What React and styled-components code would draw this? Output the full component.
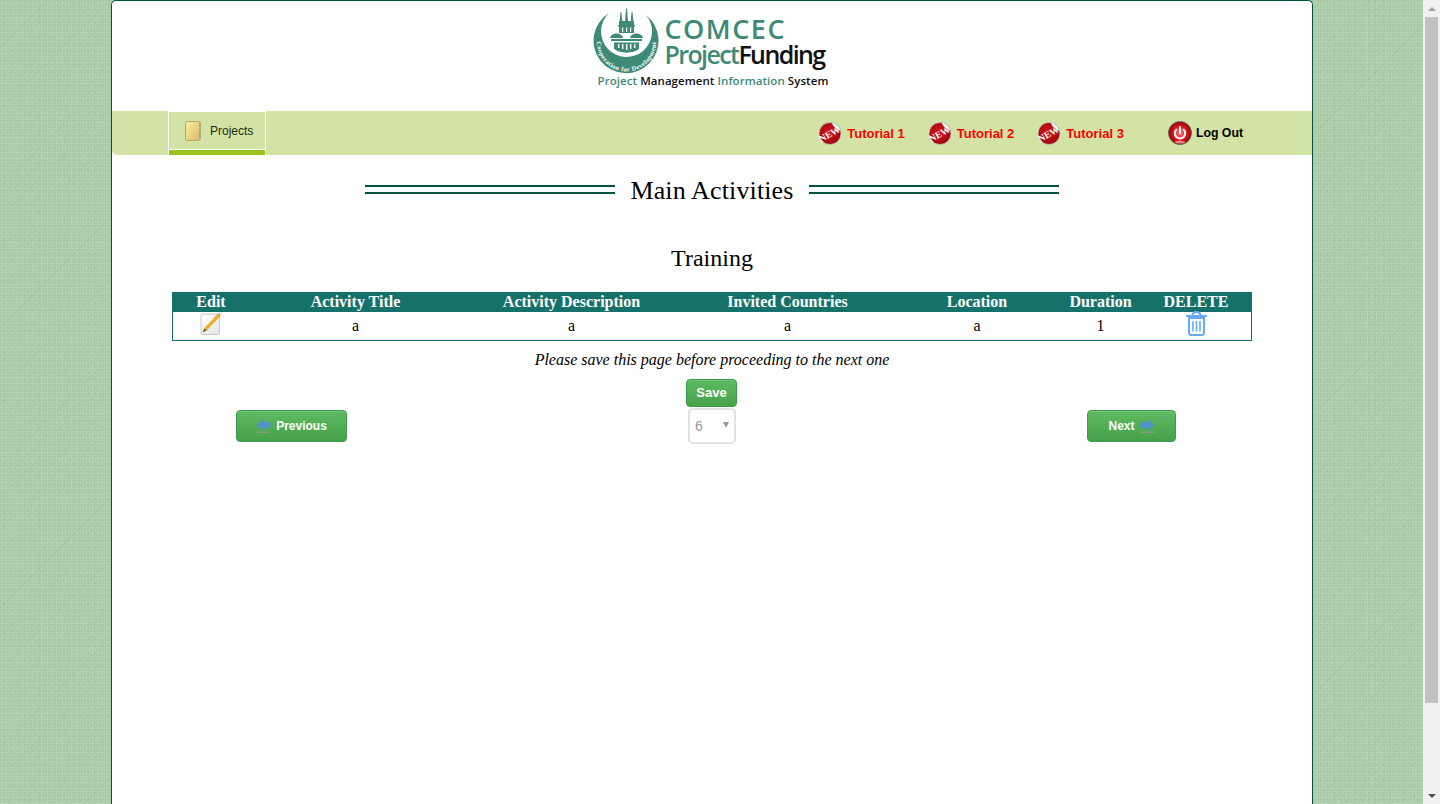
import React from "react";
import styled, { createGlobalStyle } from "styled-components";

const GlobalStyle = createGlobalStyle`
    html, body {
        margin: 0;
        padding: 0;
        height: 100%;
        overflow: hidden;
    }

    body {
        font-family: "Liberation Serif", "Times New Roman", serif;
        color: #000;
    }
`;

const Screen = styled.div`
    display: flex;
    height: 100vh;
    width: 100%;
`;

const Backdrop = styled.div`
    flex: 1;
    min-width: 0;
    display: flex;
    justify-content: center;
    background-color: #b1d0ae;
    background-image:
        radial-gradient(circle at 1px 1px, rgba(130, 175, 130, 0.28) 0.6px, transparent 1px),
        radial-gradient(circle at 2px 3px, rgba(210, 232, 205, 0.3) 0.6px, transparent 1px),
        radial-gradient(circle at 4px 2px, rgba(125, 170, 125, 0.22) 0.6px, transparent 1px),
        repeating-linear-gradient(135deg, rgba(120, 165, 120, 0.07) 0 1px, transparent 1px 11px);
    background-size: 3px 3px, 5px 5px, 7px 7px, auto;
`;

const Sheet = styled.div`
    box-sizing: border-box;
    width: 1202px;
    height: 100%;
    margin-right: -1px;
    background: #fff;
    border: 1px solid #00533f;
    border-bottom: none;
    border-radius: 5px 5px 0 0;
    overflow: hidden;
`;

const Masthead = styled.header`
    height: 110px;
    display: flex;
    justify-content: center;
`;

const LogoMark = styled.div`
    width: 240px;
    margin-left: -3px;
    padding-top: 7px;
    display: grid;
    grid-template-columns: 74px 1fr;
    grid-template-rows: 65px auto;

    > svg {
        margin-left: 2px;
    }
`;

const WordMark = styled.div`
    font-family: "Open Sans", "Liberation Sans", sans-serif;
    color: #3f8a76;
    padding-top: 8px;
`;

const WordTop = styled.div`
    font-size: 27px;
    line-height: 26px;
    font-weight: 600;
    letter-spacing: 1.5px;
    white-space: nowrap;
`;

const WordBottom = styled.div`
    font-size: 25px;
    line-height: 24px;
    letter-spacing: -1.6px;
    font-weight: 600;
    white-space: nowrap;

    b {
        color: #111;
        font-weight: 600;
    }
`;

const Strapline = styled.div`
    grid-column: 1 / 3;
    padding: 1px 0 0 7px;
    font-family: "Open Sans", "Liberation Sans", sans-serif;
    font-size: 11.5px;
    line-height: 14px;
    font-weight: 600;
    letter-spacing: 0.06px;
    white-space: nowrap;
    color: #111;

    em {
        font-style: normal;
        color: #3f8a76;
    }
`;

const NavBar = styled.nav`
    height: 44px;
    display: flex;
    align-items: stretch;
    padding-left: 56px;
    background: #d2e3a5;
    border-radius: 0 0 0 5px;
    font-family: "Liberation Sans", Arial, sans-serif;
`;

const NavTab = styled.a`
    box-sizing: border-box;
    width: 98px;
    display: flex;
    align-items: center;
    gap: 9px;
    padding: 0 0 6px 16px;
    border: 1px solid #fff;
    border-bottom: none;
    box-shadow: inset 0 -5px 0 #9ac51e, inset 0 -6px 0 #fff;
    font-size: 12px;
    color: #1c2a10;
`;

const NavLinks = styled.div`
    margin-left: auto;
    display: flex;
    align-items: center;
    padding-right: 69px;
`;

const NavLink = styled.a`
    display: flex;
    align-items: center;
    gap: ${(p) => (p.$red ? 5 : 4)}px;
    margin-left: ${(p) => p.$gap}px;
    font-size: ${(p) => (p.$red ? 13 : 12.3)}px;
    font-weight: bold;
    color: ${(p) => (p.$red ? "#ff0000" : "#000")};
`;

const Content = styled.main`
    padding: 0 60px;
`;

const TitleRow = styled.div`
    display: flex;
    justify-content: center;
    align-items: center;
    gap: 15px;
    padding-top: 20px;
    height: 29px;
    margin-bottom: 40px;
`;

const DoubleRule = styled.span`
    width: 250px;
    height: 5px;
    border-top: 2px solid #00533f;
    border-bottom: 2px solid #00533f;
`;

const PageTitle = styled.h1`
    margin: 3px 0 0;
    font-size: 26px;
    font-weight: normal;
    letter-spacing: 0.14px;
    line-height: 30px;
`;

const SubTitle = styled.h2`
    margin: 0 0 20px;
    text-align: center;
    font-size: 24px;
    font-weight: normal;
    line-height: 28px;
`;

const ActivityTable = styled.table`
    box-sizing: border-box;
    width: 1080px;
    table-layout: fixed;
    border-collapse: separate;
    border-spacing: 0;
    border: 1px solid #16716a;
`;

const HeadCell = styled.th`
    width: ${(p) => p.$w}px;
    height: 18px;
    padding: 0 0 1px;
    background: #16716a;
    color: #fff;
    font-size: 16px;
    font-weight: bold;
    line-height: 18px;
    text-align: center;
`;

const BodyCell = styled.td`
    height: 28px;
    padding: 0;
    font-size: 16px;
    line-height: 18px;
    text-align: center;
    vertical-align: middle;

    svg {
        display: block;
        margin: -5px auto 0;
    }
`;

const Notice = styled.p`
    margin: 10px 0 0;
    text-align: center;
    font-size: 16px;
    font-style: italic;
    line-height: 18px;
`;

const GreenButton = styled.button`
    box-sizing: border-box;
    display: inline-flex;
    align-items: center;
    justify-content: center;
    gap: 5px;
    width: ${(p) => p.$w}px;
    height: ${(p) => p.$h}px;
    padding: 0;
    border: 1px solid #3f9a45;
    border-radius: 4px;
    background: linear-gradient(to bottom, #5dbb61 0%, #46a24a 100%);
    box-shadow: inset 0 1px 0 rgba(255, 255, 255, 0.15);
    color: #fff;
    font-family: "Liberation Sans", Arial, sans-serif;
    font-size: ${(p) => p.$fs}px;
    font-weight: bold;
`;

const SaveRow = styled.div`
    display: flex;
    justify-content: center;
    margin-top: 10px;
    height: 29px;

    button {
        margin-right: 1px;
        padding-bottom: 2px;
    }
`;

const PagerRow = styled.div`
    display: grid;
    grid-template-columns: 1fr auto 1fr;
    align-items: center;
`;

const PrevSlot = styled.div`
    justify-self: start;
    padding-left: 64px;
`;

const NextSlot = styled.div`
    justify-self: end;
    padding-right: 76px;
`;

const PageSelect = styled.div`
    box-sizing: border-box;
    width: 48px;
    height: 36px;
    display: flex;
    align-items: center;
    justify-content: space-between;
    padding: 0 5px;
    border: 2px solid #e2e2e2;
    border-radius: 5px;
    background: #fff;
    color: #999;
    font-family: "Liberation Sans", Arial, sans-serif;
    font-size: 14px;

    i {
        width: 0;
        height: 0;
        margin-bottom: 3px;
        border-left: 3px solid transparent;
        border-right: 3px solid transparent;
        border-top: 6px solid #999;
    }
`;

const ScrollRail = styled.aside`
    width: 17px;
    flex: none;
    display: flex;
    flex-direction: column;
    align-items: center;
    background: #f1f1f1;
`;

const ScrollArrow = styled.div`
    height: 17px;
    display: flex;
    align-items: center;
    justify-content: center;

    i {
        width: 0;
        height: 0;
        border-left: 4px solid transparent;
        border-right: 4px solid transparent;
        border-${(p) => (p.$down ? "top" : "bottom")}: 4px solid ${(p) => (p.$down ? "#505050" : "#a3a3a3")};
    }
`;

const ScrollThumb = styled.div`
    width: 13px;
    height: 686px;
    background: #c1c1c1;
`;

const ScrollSpace = styled.div`
    flex: 1;
`;

const columns = [
    ["Edit", 76],
    ["Activity Title", 213],
    ["Activity Description", 219],
    ["Invited Countries", 213],
    ["Location", 166],
    ["Duration", 81],
    ["DELETE", 110],
];

const Emblem = () => (
    <svg width="66" height="66" viewBox="0 0 66 66">
        <defs>
            <path id="ringText" d="M3.9 34 A 29.6 29.6 0 0 0 63.1 34" />
        </defs>
        <path
            fill="#3f8a76"
            d="M16 5 A 32.5 32.5 0 1 0 53 7 A 25.5 25.5 0 1 1 16 5 Z"
        />
        <text fontFamily="Liberation Serif, serif" fontWeight="bold" fontSize="6.4" fill="#fff" letterSpacing="0.45">
            <textPath href="#ringText" startOffset="50%" textAnchor="middle">Cooperation for Development</textPath>
        </text>
        <g fill="#3f8a76">
            <path d="M33 0.5 h1 l1 13 h-3 Z" />
            <path d="M27.5 4 h0.9 l0.9 10 h-2.7 Z" />
            <path d="M38.6 4 h0.9 l0.9 10 h-2.7 Z" />
            <rect x="26" y="13" width="15" height="12" />
            <rect x="25" y="17" width="17" height="1.3" />
            <path d="M17 30 C 18 24 29 24 30 30 Z" />
            <path d="M37 30 C 38 24 49 24 50 30 Z" />
            <rect x="18" y="31" width="31" height="2" />
            <path d="M21 34.5 h25 v6 C 42 46 25 46 21 40.5 Z" />
        </g>
        <g fill="#fff">
            <rect x="29" y="19.5" width="1.2" height="4.5" />
            <rect x="33" y="19.5" width="1.2" height="4.5" />
            <rect x="37" y="19.5" width="1.2" height="4.5" />
            <rect x="25" y="36" width="1.4" height="4" />
            <rect x="29" y="36" width="1.4" height="5" />
            <rect x="33" y="36" width="1.4" height="6" />
            <rect x="37" y="36" width="1.4" height="5" />
            <rect x="41" y="36" width="1.4" height="4" />
        </g>
    </svg>
);

const FolderIcon = () => (
    <svg width="16" height="20" viewBox="0 0 16 20">
        <defs>
            <linearGradient id="folderFill" x1="0" y1="0" x2="1" y2="1">
                <stop offset="0" stopColor="#fbf09c" />
                <stop offset="1" stopColor="#d9b968" />
            </linearGradient>
        </defs>
        <rect x="0.5" y="0.5" width="14.5" height="19" rx="1.5" fill="url(#folderFill)" stroke="#b9a469" />
        <path d="M15 2 v4" stroke="#c9743f" />
        <path d="M15 7 v5" stroke="#8aa25a" />
        <path d="M15 13 v5" stroke="#6f9db5" />
    </svg>
);

const NewBadge = ({ id }) => (
    <svg width="24" height="24" viewBox="0 0 24 24">
        <defs>
            <radialGradient id={id} cx="0.45" cy="0.45" r="0.7">
                <stop offset="0" stopColor="#e0141a" />
                <stop offset="1" stopColor="#86060a" />
            </radialGradient>
        </defs>
        <circle cx="12" cy="12.5" r="11" fill={`url(#${id})`} stroke="#c9c9c9" strokeWidth="0.8" />
        <path d="M13.5 1 C 17 1.5 21.5 5 23 10 C 20 9.5 15 6.5 13.5 1 Z" fill="#eeeeee" stroke="#8f8f8f" strokeWidth="0.4" />
        <text
            x="11.5"
            y="16"
            transform="rotate(-30 12 13)"
            textAnchor="middle"
            fontFamily="Liberation Serif, serif"
            fontWeight="bold"
            fontSize="9.5"
            fill="#fff"
        >
            NEW
        </text>
    </svg>
);

const PowerIcon = () => (
    <svg width="24" height="24" viewBox="0 0 24 24">
        <defs>
            <radialGradient id="powerFill" cx="0.5" cy="0.5" r="0.52">
                <stop offset="0" stopColor="#ff7a7a" />
                <stop offset="0.55" stopColor="#e0161c" />
                <stop offset="0.85" stopColor="#a80a0e" />
                <stop offset="1" stopColor="#5e0406" />
            </radialGradient>
        </defs>
        <circle cx="12" cy="12" r="11.5" fill="url(#powerFill)" stroke="#666" strokeWidth="0.8" />
        <ellipse cx="12" cy="21" rx="5" ry="1.5" fill="#ffb0b0" opacity="0.7" />
        <path d="M8.3 8.6 A 5.2 5.2 0 1 0 15.7 8.6" fill="none" stroke="#fff" strokeWidth="2" strokeLinecap="round" />
        <path d="M12 6 V 12" stroke="#fff" strokeWidth="2" strokeLinecap="round" />
    </svg>
);

const EditIcon = () => (
    <svg width="22" height="23" viewBox="0 0 22 23">
        <defs>
            <linearGradient id="pageFill" x1="0" y1="0" x2="1" y2="1">
                <stop offset="0" stopColor="#ffffff" />
                <stop offset="1" stopColor="#e4e4e4" />
            </linearGradient>
        </defs>
        <rect x="1" y="2" width="18.5" height="20.5" rx="1.5" fill="url(#pageFill)" stroke="#c8c8c8" />
        <path d="M3 20 L 4.5 16.5 L 18 2 L 20 4 L 6.5 18.3 Z" fill="#f2b01e" stroke="#c58a12" strokeWidth="0.5" />
        <path d="M3 20 L 4.5 16.5 L 6.5 18.3 Z" fill="#5a4a30" />
        <path d="M18 2 L 19.2 0.8 L 21.2 2.8 L 20 4 Z" fill="#d9a49a" />
    </svg>
);

const TrashIcon = () => (
    <svg width="21" height="25" viewBox="0 0 21 25" fill="none" stroke="#66aaff" strokeWidth="2">
        <path d="M1 5 H 20" strokeWidth="2.2" strokeLinecap="round" />
        <path d="M6.5 4.5 C 6.5 1.5 8 1 10.5 1 C 13 1 14.5 1.5 14.5 4.5" />
        <path d="M3 7 H 18 V 22 C 18 23.3 17.2 24 16 24 H 5 C 3.8 24 3 23.3 3 22 Z" />
        <path d="M7 10 V 20.5 M10.5 10 V 20.5 M14 10 V 20.5" strokeWidth="1.6" />
    </svg>
);

const ArrowIcon = ({ flip }) => (
    <svg width="15" height="14" viewBox="0 0 15 14" style={flip ? { transform: "scaleX(-1)" } : undefined}>
        <path d="M0.5 6 L 7 0.5 V 3 H 14.5 V 9 H 7 V 11.5 Z" fill="#4f93c9" />
        <rect x="1" y="12.5" width="13" height="1.5" fill="#8c9a8c" />
    </svg>
);

const App = () => {
    const heads = columns.map(([label, w]) => (
        <HeadCell key={label} $w={w}>{label}</HeadCell>
    ));

    return (
        <Screen>
            <GlobalStyle />
            <Backdrop>
                <Sheet>
                    <Masthead>
                        <LogoMark>
                            <Emblem />
                            <WordMark>
                                <WordTop>COMCEC</WordTop>
                                <WordBottom>Project<b>Funding</b></WordBottom>
                            </WordMark>
                            <Strapline>
                                <em>Project</em> Management <em>Information</em> System
                            </Strapline>
                        </LogoMark>
                    </Masthead>
                    <NavBar>
                        <NavTab>
                            <FolderIcon />
                            <span>Projects</span>
                        </NavTab>
                        <NavLinks>
                            <NavLink $red $gap={0}><NewBadge id="newFill1" />Tutorial 1</NavLink>
                            <NavLink $red $gap={23}><NewBadge id="newFill2" />Tutorial 2</NavLink>
                            <NavLink $red $gap={23}><NewBadge id="newFill3" />Tutorial 3</NavLink>
                            <NavLink $gap={44}><PowerIcon />Log Out</NavLink>
                        </NavLinks>
                    </NavBar>
                    <Content>
                        <TitleRow>
                            <DoubleRule />
                            <PageTitle>Main Activities</PageTitle>
                            <DoubleRule />
                        </TitleRow>
                        <SubTitle>Training</SubTitle>
                        <ActivityTable>
                            <thead>
                                <tr>{heads}</tr>
                            </thead>
                            <tbody>
                                <tr>
                                    <BodyCell><EditIcon /></BodyCell>
                                    <BodyCell>a</BodyCell>
                                    <BodyCell>a</BodyCell>
                                    <BodyCell>a</BodyCell>
                                    <BodyCell>a</BodyCell>
                                    <BodyCell>1</BodyCell>
                                    <BodyCell><TrashIcon /></BodyCell>
                                </tr>
                            </tbody>
                        </ActivityTable>
                        <Notice>Please save this page before proceeding to the next one</Notice>
                        <SaveRow>
                            <GreenButton $w={51} $h={28} $fs={13}>Save</GreenButton>
                        </SaveRow>
                        <PagerRow>
                            <PrevSlot>
                                <GreenButton $w={111} $h={32} $fs={12}><ArrowIcon />Previous</GreenButton>
                            </PrevSlot>
                            <PageSelect>6<i /></PageSelect>
                            <NextSlot>
                                <GreenButton $w={89} $h={32} $fs={12}>Next<ArrowIcon flip /></GreenButton>
                            </NextSlot>
                        </PagerRow>
                    </Content>
                </Sheet>
            </Backdrop>
            <ScrollRail>
                <ScrollArrow><i /></ScrollArrow>
                <ScrollThumb />
                <ScrollSpace />
                <ScrollArrow $down><i /></ScrollArrow>
            </ScrollRail>
        </Screen>
    );
};

export default App;
